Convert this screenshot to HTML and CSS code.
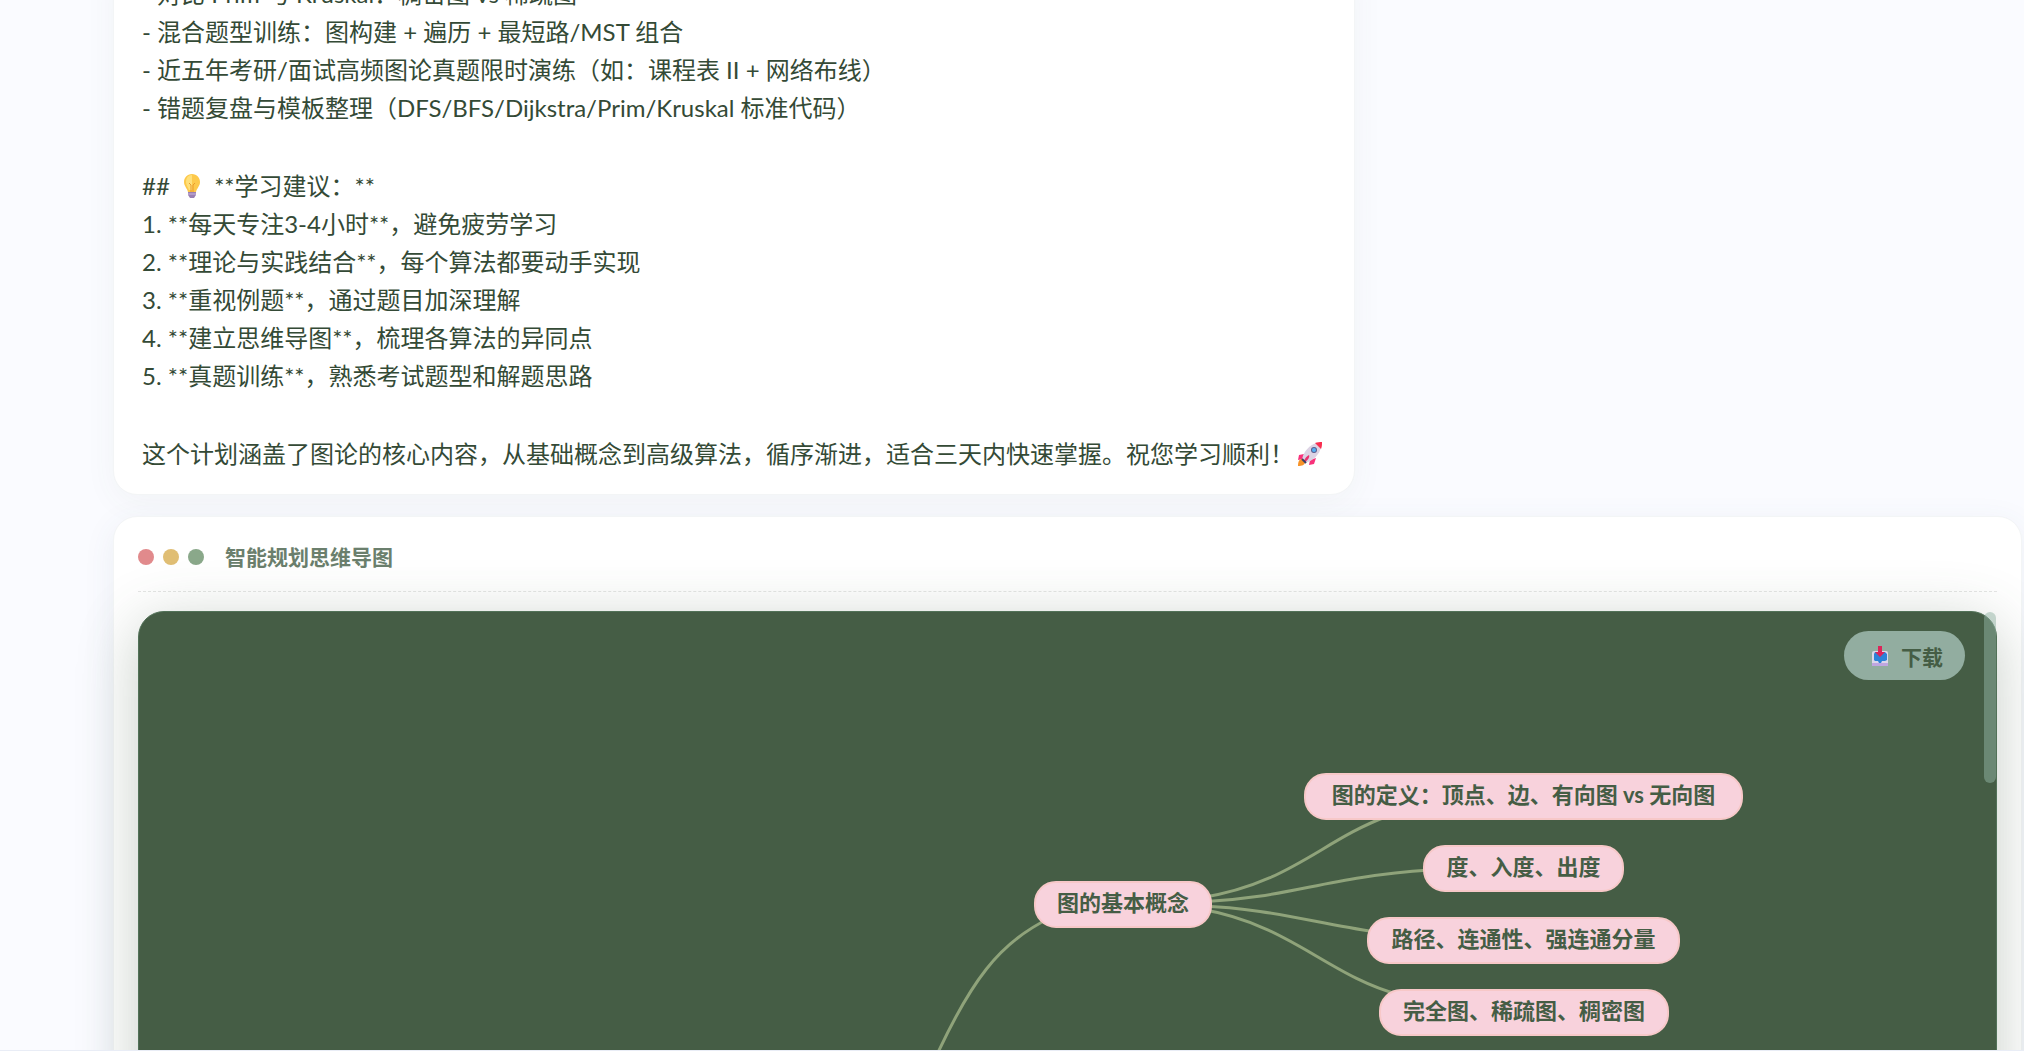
FILE: index.html
```html
<!DOCTYPE html>
<html lang="zh-CN">
<head>
  <meta charset="UTF-8">
  <title>智能规划</title>
  <meta name="viewport" content="width=device-width, initial-scale=1.0">
  <link rel="stylesheet" href="styles.css">
</head>
<body>
  <main class="chat">
    <!-- Study plan message -->
    <div class="message">
      <div class="block">
        <p>- 对比 Prim 与 Kruskal：稠密图 vs 稀疏图</p>
        <p>- 混合题型训练：图构建 + 遍历 + 最短路/MST 组合</p>
        <p>- 近五年考研/面试高频图论真题限时演练（如：课程表 II + 网络布线）</p>
        <p>- 错题复盘与模板整理（DFS/BFS/Dijkstra/Prim/Kruskal 标准代码）</p>
      </div>
      <div class="block">
        <p>## <svg class="emoji bulb" viewBox="0 0 24 24" aria-hidden="true"><path d="M12 0C7 0 4 4 4 8c0 4 3 6 4 10h8c1-4 4-6 4-10 0-4-3-8-8-8z" fill="#fdc94b"/><path d="M12 1C8 1 6 4 6 8c0 3 2 5 3 8h3z" fill="#ffe07a"/><path d="M9 9l2 2v7M15 9l-2 2v7" fill="none" stroke="#e99a2c"/><path d="M8 18h8v3l-2 3h-4l-2-3z" fill="#9a80b4"/><path d="M8 20h8" stroke="#cbb6dc"/></svg> **学习建议：**</p>
        <p>1. **每天专注3-4小时**，避免疲劳学习</p>
        <p>2. **理论与实践结合**，每个算法都要动手实现</p>
        <p>3. **重视例题**，通过题目加深理解</p>
        <p>4. **建立思维导图**，梳理各算法的异同点</p>
        <p>5. **真题训练**，熟悉考试题型和解题思路</p>
      </div>
      <div class="block">
        <p>这个计划涵盖了图论的核心内容，从基础概念到高级算法，循序渐进，适合三天内快速掌握。祝您学习顺利！<svg class="emoji" viewBox="0 0 24 24" aria-hidden="true"><path d="M6 12l-5 1-1 5 5-1zM12 18l-1 5 5-1 2-6z" fill="#f8317a"/><path d="M4 17c-3 0-4 3-4 7 4 0 7-1 7-4z" fill="#f79328"/><path d="M4 18C5 10 12 2 19 1l4 4c-1 7-8 14-16 16z" fill="#dcd3e4"/><path d="M17 1c2-1 5-1 7-1 0 2 0 5-1 7z" fill="#f92f50"/><circle cx="16" cy="8" r="3" fill="#5b5d8e"/><circle cx="16" cy="8" r="2" fill="#54b2f4"/><path d="M6 19c1-3 3-5 5-6 1 2-1 5-4 7z" fill="#e9316d"/><path d="M4 17l4 4" stroke="#3d3d61" stroke-width="2"/></svg></p>
      </div>
    </div>

    <!-- Mind map card -->
    <section class="map-card">
      <div class="map-header">
        <span class="dot red"></span>
        <span class="dot yellow"></span>
        <span class="dot green"></span>
        <h2>智能规划思维导图</h2>
      </div>
      <div class="map-panel">
        <svg class="links" aria-hidden="true">
          <path d="M911 306C861 330 831 368 791 458"/>
          <path d="M1061 286C1151 272 1183 228 1249 204"/>
          <path d="M1061 290C1151 286 1185 265 1291 258"/>
          <path d="M1061 294C1126 296 1171 310 1236 320"/>
          <path d="M1061 297C1151 312 1189 364 1261 383"/>
        </svg>
        <div class="node concept">图的基本概念</div>
        <div class="node definition">图的定义：顶点、边、有向图 vs 无向图</div>
        <div class="node degree">度、入度、出度</div>
        <div class="node route">路径、连通性、强连通分量</div>
        <div class="node kinds">完全图、稀疏图、稠密图</div>
        <button class="download" type="button">
          <svg viewBox="0 0 16 20" aria-hidden="true"><rect y="5" width="16" height="15" rx="2" fill="#dcd7ea"/><path d="M0 17h16v3H0z" fill="#bfa6e0"/><path d="M3 6h10l2 2v6l-2 1h-3l-1 2H7l-1-2H3l-1-1V8z" fill="#2c82d8"/><path d="M6 0h4v6h3l-5 5-5-5h3z" fill="#dc2459"/></svg>
          下载
        </button>
        <div class="scroll-thumb"></div>
      </div>
    </section>
  </main>
  <footer class="bottom-bar"></footer>
</body>
</html>
```
FILE: styles.css
```css
* {
  box-sizing: border-box;
}
body {
  margin: 0;
  height: 100vh;
  display: flex;
  flex-direction: column;
  font-family: Lato, "Noto Sans CJK SC", sans-serif;
  color: #344a36;
  background: #fff;
}
.chat {
  flex: 1;
  min-height: 0;
  overflow: hidden;
  display: flex;
  flex-direction: column;
  align-items: flex-start;
  gap: 21px;
  padding: 0 2px 0 113px;
  background: #fafbff;
}
.bottom-bar {
  flex: none;
  height: 8px;
  border-top: 1px solid #e9edf6;
}

/* message bubble, scrolled past its top */
.message {
  flex: none;
  margin-top: -46px;
  padding: 20px 28px 21px;
  font-size: 24px;
  line-height: 38px;
  background: #fff;
  border: 1px solid #f3f5f6;
  border-radius: 24px;
  box-shadow: 0 8px 32px rgba(69, 93, 69, 0.05);
}
.block + .block {
  margin-top: 40px;
}
.message p {
  margin: 0;
}
.emoji {
  width: 24px;
  height: 24px;
  margin: 0 4px;
  vertical-align: -3px;
}

/* mind map */
.map-card {
  flex: none;
  align-self: stretch;
  padding: 24px;
  background: #fff;
  border: 1px solid #f3f5f6;
  border-radius: 24px;
  box-shadow: 0 8px 32px rgba(69, 93, 109, 0.08);
}
.map-header {
  display: flex;
  align-items: center;
  gap: 9px;
  height: 51px;
  padding-bottom: 18px;
  margin-bottom: 19px;
  border-bottom: 1px dashed #e5e6e5;
}
.dot {
  width: 16px;
  height: 16px;
  border-radius: 50%;
}
.red {
  background: #e18a8c;
}
.yellow {
  background: #e0be74;
}
.green {
  background: #8aa88a;
}
.map-header h2 {
  margin: 0 0 0 12px;
  font-size: 21px;
  line-height: 32px;
  color: #6b7f6d;
}
.map-panel {
  position: relative;
  height: 640px;
  background: #455d45;
  border: 1px solid #527258;
  border-radius: 26px;
  box-shadow: 0 12px 60px rgba(69, 93, 69, 0.3);
}
.links {
  position: absolute;
  inset: 0;
  width: 100%;
  height: 100%;
  fill: none;
  stroke: #8fa37a;
  stroke-width: 3;
}
.node {
  position: absolute;
  height: 47px;
  font-size: 22px;
  font-weight: bold;
  line-height: 40px;
  text-align: center;
  white-space: nowrap;
  color: #455d45;
  background: #f8d2dc;
  border: 2px solid #f7c8c8;
  border-radius: 22px;
}
.concept {
  left: 895px;
  top: 269px;
  width: 178px;
}
.definition {
  left: 1165px;
  top: 161px;
  width: 439px;
}
.degree {
  left: 1284px;
  top: 233px;
  width: 201px;
}
.route {
  left: 1228px;
  top: 305px;
  width: 313px;
}
.kinds {
  left: 1240px;
  top: 377px;
  width: 290px;
}
.download {
  position: absolute;
  top: 19px;
  right: 31px;
  display: flex;
  align-items: center;
  gap: 13px;
  height: 49px;
  padding: 0 22px 0 28px;
  font-family: inherit;
  font-size: 21px;
  font-weight: bold;
  color: #455d45;
  background: #92ada0;
  border: none;
  border-radius: 25px;
  cursor: pointer;
}
.download svg {
  width: 16px;
  height: 20px;
}
.scroll-thumb {
  position: absolute;
  top: 0;
  right: 0;
  width: 12px;
  height: 171px;
  background: rgba(146, 180, 164, 0.5);
  border-radius: 6px;
}
```
